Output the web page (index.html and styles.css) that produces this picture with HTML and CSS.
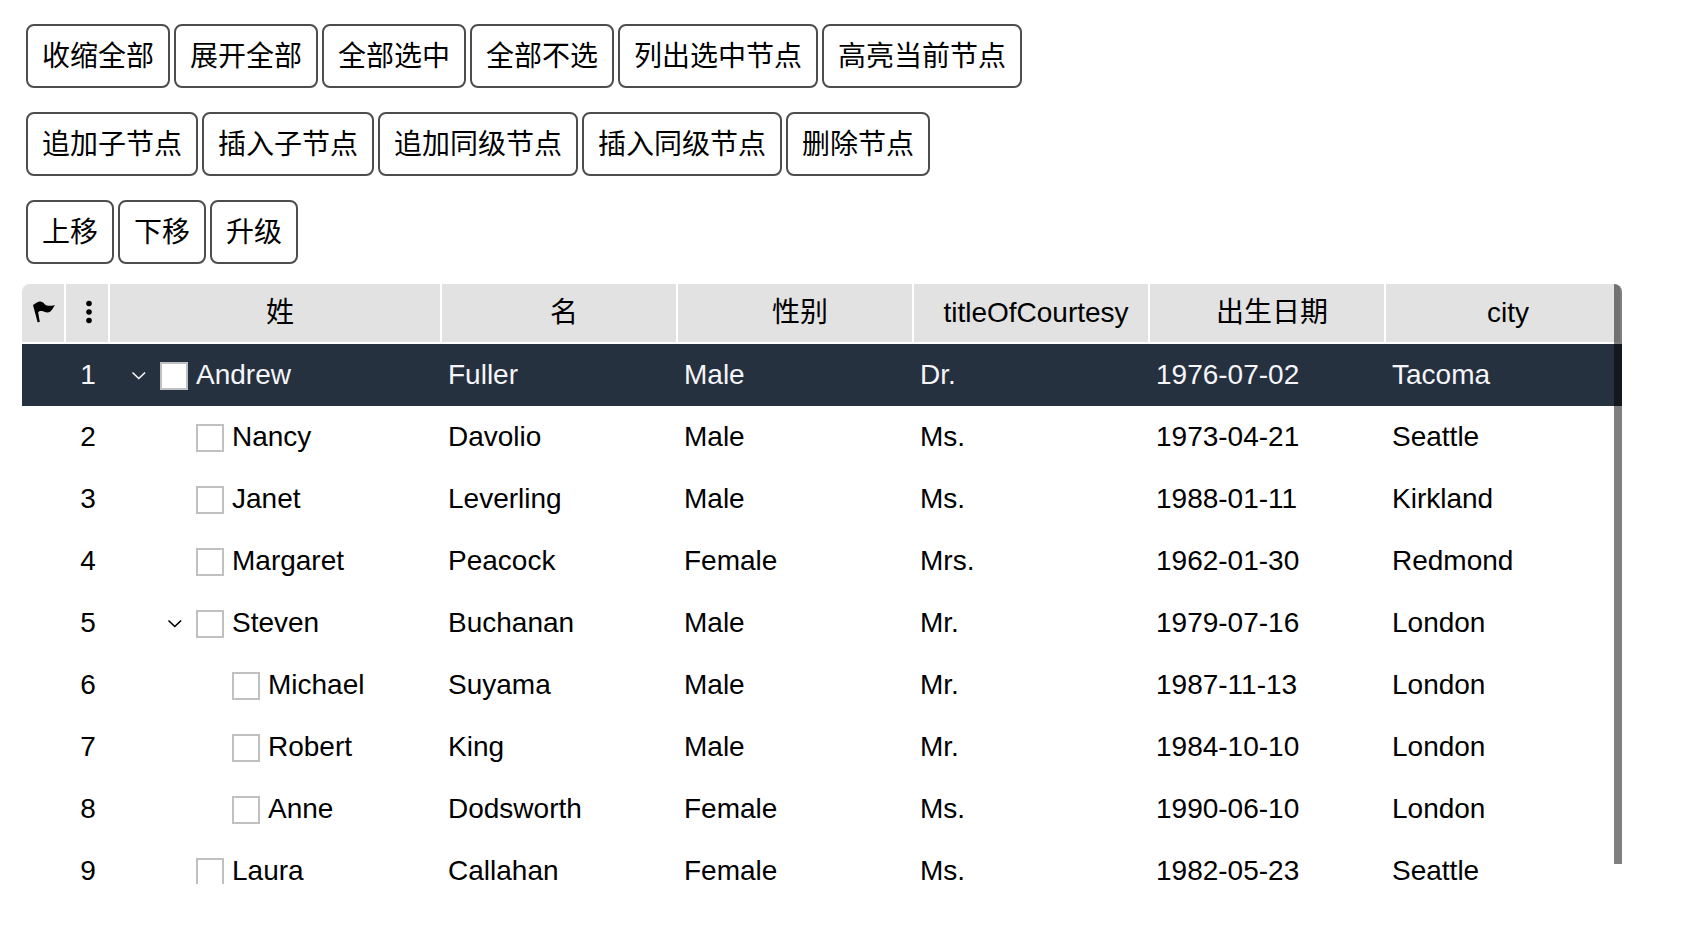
FILE: index.html
```html
<!DOCTYPE html>
<html lang="zh-CN">
<head>
<meta charset="utf-8">
<title>Tree grid</title>
<link rel="stylesheet" href="styles.css">
</head>
<body>
<svg class="defs" aria-hidden="true">
  <symbol id="chevron" viewBox="0 0 16 10"><path d="M2 2l5.800 5.500L13.600 2" fill="none" stroke="currentColor" stroke-width="1.700" stroke-linecap="round" stroke-linejoin="round"/></symbol>
</svg>
<div class="toolbars">
  <div class="toolbar">
    <button type="button">收缩全部</button>
    <button type="button">展开全部</button>
    <button type="button">全部选中</button>
    <button type="button">全部不选</button>
    <button type="button">列出选中节点</button>
    <button type="button">高亮当前节点</button>
  </div>
  <div class="toolbar">
    <button type="button">追加子节点</button>
    <button type="button">插入子节点</button>
    <button type="button">追加同级节点</button>
    <button type="button">插入同级节点</button>
    <button type="button">删除节点</button>
  </div>
  <div class="toolbar">
    <button type="button">上移</button>
    <button type="button">下移</button>
    <button type="button">升级</button>
  </div>
</div>
<div class="grid">
  <table>
    <colgroup><col class="col-mark"><col class="col-mark"><col class="col-tree"><col><col><col><col><col></colgroup>
    <thead>
      <tr>
        <th class="mark"><svg width="24" height="24" viewBox="0 0 24 24"><path d="M1 5C3 4.200 5 1.500 8 1.500c4 0 4.500 4.300 8.500 4.300 2.200 0 4.200-.3 6.500-.6-2 2-3.500 7.300-7.500 7.300-3 0-4-2-7-1.500-1.500.3-2 .8-2.300 1.600L7.800 22 5.600 22.300z" fill="currentColor"/></svg></th>
        <th class="mark"><svg width="24" height="24" viewBox="0 0 24 24" fill="currentColor"><circle cx="13" cy="3.500" r="2.800"/><circle cx="13" cy="12" r="2.800"/><circle cx="13" cy="20.500" r="2.800"/></svg></th>
        <th>姓</th><th>名</th><th>性别</th><th>titleOfCourtesy</th><th>出生日期</th><th>city</th>
      </tr>
    </thead>
    <tbody>
      <tr class="current"><td></td><td class="num">1</td><td><div class="node level-0"><button type="button" class="toggle" aria-label="收缩 Andrew"><svg width="16" height="10"><use href="#chevron"/></svg></button><label><input type="checkbox">Andrew</label></div></td><td>Fuller</td><td>Male</td><td>Dr.</td><td>1976-07-02</td><td>Tacoma</td></tr>
      <tr><td></td><td class="num">2</td><td><div class="node level-1 leaf"><label><input type="checkbox">Nancy</label></div></td><td>Davolio</td><td>Male</td><td>Ms.</td><td>1973-04-21</td><td>Seattle</td></tr>
      <tr><td></td><td class="num">3</td><td><div class="node level-1 leaf"><label><input type="checkbox">Janet</label></div></td><td>Leverling</td><td>Male</td><td>Ms.</td><td>1988-01-11</td><td>Kirkland</td></tr>
      <tr><td></td><td class="num">4</td><td><div class="node level-1 leaf"><label><input type="checkbox">Margaret</label></div></td><td>Peacock</td><td>Female</td><td>Mrs.</td><td>1962-01-30</td><td>Redmond</td></tr>
      <tr><td></td><td class="num">5</td><td><div class="node level-1"><button type="button" class="toggle" aria-label="收缩 Steven"><svg width="16" height="10"><use href="#chevron"/></svg></button><label><input type="checkbox">Steven</label></div></td><td>Buchanan</td><td>Male</td><td>Mr.</td><td>1979-07-16</td><td>London</td></tr>
      <tr><td></td><td class="num">6</td><td><div class="node level-2 leaf"><label><input type="checkbox">Michael</label></div></td><td>Suyama</td><td>Male</td><td>Mr.</td><td>1987-11-13</td><td>London</td></tr>
      <tr><td></td><td class="num">7</td><td><div class="node level-2 leaf"><label><input type="checkbox">Robert</label></div></td><td>King</td><td>Male</td><td>Mr.</td><td>1984-10-10</td><td>London</td></tr>
      <tr><td></td><td class="num">8</td><td><div class="node level-2 leaf"><label><input type="checkbox">Anne</label></div></td><td>Dodsworth</td><td>Female</td><td>Ms.</td><td>1990-06-10</td><td>London</td></tr>
      <tr><td></td><td class="num">9</td><td><div class="node level-1 leaf"><label><input type="checkbox">Laura</label></div></td><td>Callahan</td><td>Female</td><td>Ms.</td><td>1982-05-23</td><td>Seattle</td></tr>
    </tbody>
  </table>
  <div class="scrollbar"></div>
</div>
</body>
</html>
```
FILE: styles.css
```css
* {
  box-sizing: border-box;
}

body {
  margin: 0;
  padding: 24px 64px 24px 22px;
  background: #fff;
  color: #000;
  font: 28px/62px "Liberation Sans", Arial, "Noto Sans CJK SC", sans-serif;
}

.defs {
  position: absolute;
  width: 0;
  height: 0;
}

.toolbars {
  display: flex;
  flex-direction: column;
  gap: 24px;
  padding: 0 4px;
  margin-bottom: 20px;
}

.toolbar {
  display: flex;
  flex-wrap: wrap;
  gap: 4px;
}

.toolbar button {
  height: 64px;
  padding: 2px 14px 0;
  border: 2px solid #4d4d4d;
  border-radius: 8px;
  background: #fff;
  color: inherit;
  font: inherit;
  line-height: 58px;
}

.grid {
  position: relative;
  height: 600px;
  overflow: hidden;
  border-radius: 8px;
}

table {
  width: 100%;
  table-layout: fixed;
  border-collapse: separate;
  border-spacing: 0;
}

.col-mark {
  width: 44px;
}

.col-tree {
  width: 332px;
}

th {
  height: 60px;
  padding: 0 0 0 10px;
  border-right: 2px solid #fff;
  border-bottom: 2px solid #fff;
  background: #e2e2e2;
  font-weight: normal;
  line-height: 58px;
}

th.mark {
  padding: 0 0 2px 2px;
}

th svg {
  display: block;
  margin: 0 auto;
}

td {
  height: 62px;
  padding: 0 0 0 6px;
  white-space: nowrap;
}

td.num {
  padding-left: 0;
  text-align: center;
}

.current {
  background: #26313f;
  color: #f5f5fa;
}

.node {
  display: flex;
  align-items: center;
  height: 62px;
}

.level-0 {
  padding-left: 8px;
}

.level-1 {
  padding-left: 44px;
}

.level-2 {
  padding-left: 80px;
}

.leaf::before {
  content: "";
  width: 36px;
}

.toggle {
  display: flex;
  align-items: center;
  width: 36px;
  height: 36px;
  padding: 2px 0 0 7px;
  border: 0;
  background: none;
  color: inherit;
}

.node label {
  display: flex;
  align-items: center;
  gap: 8px;
}

.node input {
  appearance: none;
  width: 28px;
  height: 28px;
  margin: 2px 0 0;
  border: 2px solid #c0c0c0;
  background: #fff;
}

.scrollbar {
  position: absolute;
  top: 0;
  right: 0;
  bottom: 20px;
  width: 8px;
  background: rgba(0, 0, 0, 0.5);
}
```
